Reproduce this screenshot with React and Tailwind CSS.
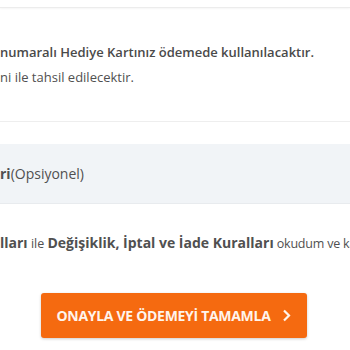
export default function App() {
  return (
    <div
      className="w-[350px] h-[350px] overflow-hidden bg-white text-[#505050]"
      style={{ fontFamily: '"Open Sans", "Noto Sans", sans-serif' }}
    >
      {/* header edge */}
      <div className="h-[8px] border-b border-[#ececec] shadow-[0_1px_2px_rgba(0,0,0,0.04)]" />

      {/* gift card info */}
      <div className="pt-[32px] whitespace-nowrap text-[13px]">
        <p className="font-semibold leading-[25px] text-[#4a4a4a]">numaralı Hediye Kartınız ödemede kullanılacaktır.</p>
        <p className="leading-[25px]">ni ile tahsil edilecektir.</p>
      </div>

      <div className="mt-[31px] border-t border-[#eeeeee]" />

      {/* invoice note */}
      <div className="mt-[22px] h-[60px] bg-[#f1f4f7] border-b border-[#e8ebee] flex items-center whitespace-nowrap text-[14px]">
        <span className="font-bold">ri</span>
        <span>(Opsiyonel)</span>
      </div>

      {/* agreement */}
      <p className="mt-[29px] whitespace-nowrap text-[12.5px] leading-[20px] overflow-hidden">
        <span className="font-bold text-[14px]">lları</span> ile{" "}
        <span className="font-bold text-[14px]">Değişiklik, İptal ve İade Kuralları</span>
        <span className="tracking-[-0.2px]"> okudum ve kabul ediyorum.</span>
      </p>

      <div className="mt-[39px] flex justify-center pr-[3px]">
        <button className="w-[266px] h-[45px] rounded-[3px] bg-[#f56a10] shadow-[0_1px_3px_rgba(0,0,0,0.2)] flex items-center justify-center gap-[11px] text-[#fff4ec] text-[14px] font-bold tracking-[-0.3px]">
          <span>ONAYLA VE ÖDEMEYİ TAMAMLA</span>
          <svg width="9" height="13" viewBox="0 0 9 13" fill="none">
            <path d="M2 1.5 L7 6.5 L2 11.5" stroke="currentColor" strokeWidth="2.2" />
          </svg>
        </button>
      </div>
    </div>
  );
}
